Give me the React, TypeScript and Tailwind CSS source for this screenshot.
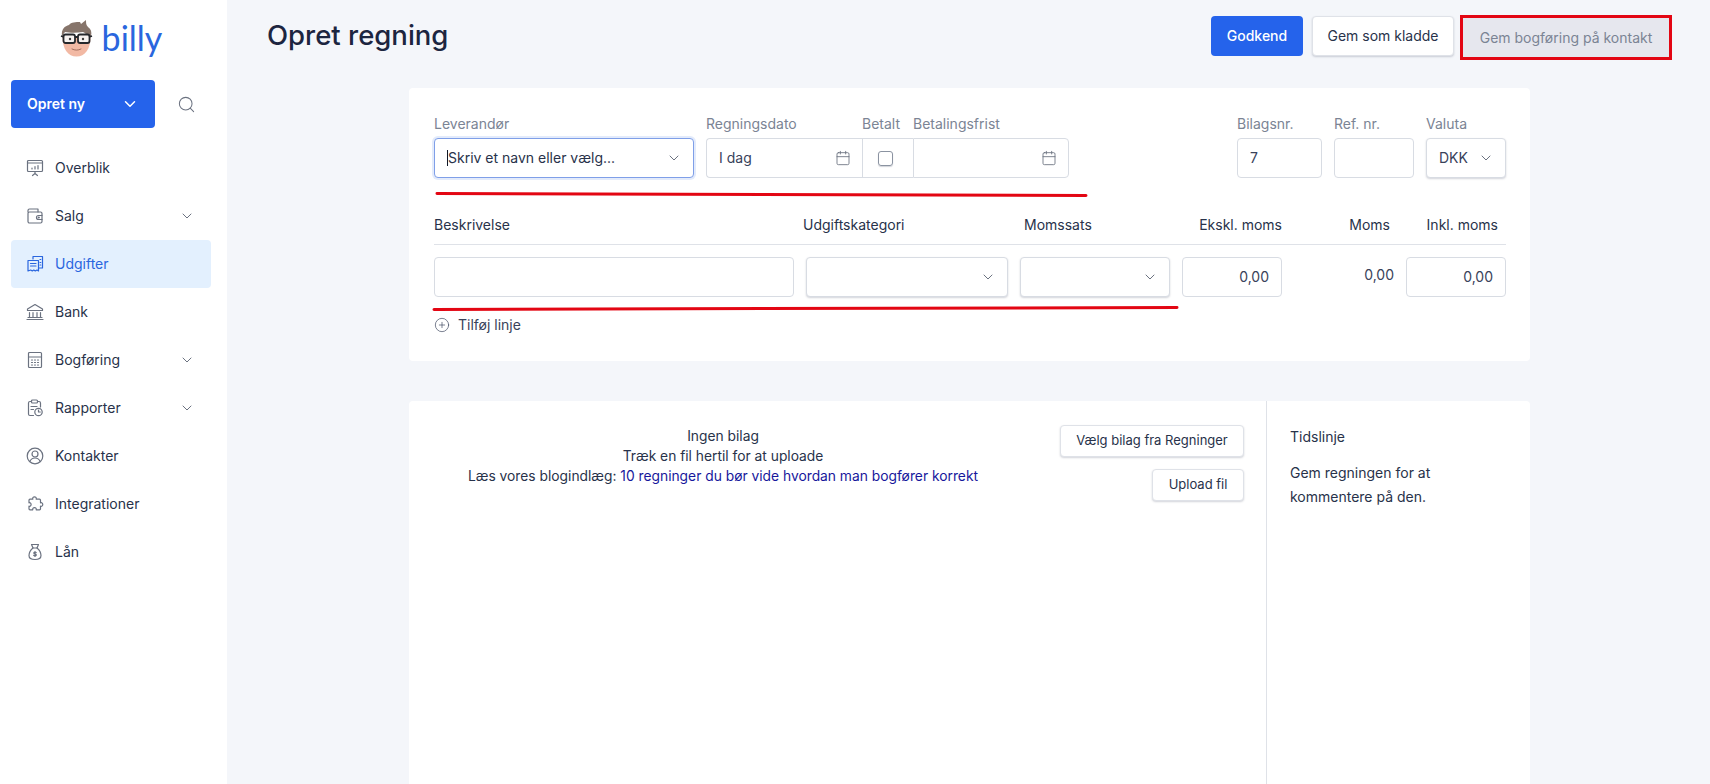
import { Calendar, ChevronDown, CirclePlus, Search } from 'lucide-react';
import type { ReactNode } from 'react';

const stroke = {
  fill: 'none',
  stroke: 'currentColor',
  strokeWidth: 1.2,
  strokeLinecap: 'round' as const,
  strokeLinejoin: 'round' as const,
};

function NavSvg({ children }: { children: ReactNode }) {
  return (
    <svg width="18" height="18" viewBox="0 0 18 18" {...stroke} className="shrink-0">
      {children}
    </svg>
  );
}

function BillyFace() {
  return (
    <svg width="33" height="38" viewBox="0 0 33 38" className="shrink-0">
      <path d="M2.500 18c0 12 5.500 19.500 14 19.500S30.500 30 30.500 18z" fill="#f2b9a4" />
      <path d="M2 17c-1-7 3-10 7-11 2-3 7-3 11-3l1 2 5-4c0 3 0 5 2 7 3 2 4 5 3 9l-3 3c-1-4-2-6-5-7-6 1-13 1-18 0-2 2-3 5-3 7z" fill="#86746a" />
      <rect x="3.500" y="15.500" width="11.500" height="8.500" rx="2" fill="#f8f3f1" stroke="#26282c" strokeWidth="1.800" />
      <rect x="18" y="15.500" width="11.500" height="8.500" rx="2" fill="#f8f3f1" stroke="#26282c" strokeWidth="1.800" />
      <path d="M15 18h3M1 17l3 1M29 18l3-1" stroke="#26282c" strokeWidth="1.800" />
      <circle cx="10" cy="20" r="1.200" fill="#3d3d3d" />
      <circle cx="23" cy="20" r="1.200" fill="#3d3d3d" />
      <path d="M12 30c3 1.500 6 1.500 9 0" fill="none" stroke="#a5705f" strokeWidth="1" strokeLinecap="round" />
    </svg>
  );
}

const OverblikIcon = () => (
  <NavSvg>
    <rect x="1.500" y="1.500" width="15" height="11" rx="1" />
    <path d="M1.500 4h15M9 12.500v2M6.500 16.500 9 14.500l2.500 2M6 10V9M9 10V7.500M12 10V6.500" />
  </NavSvg>
);
const SalgIcon = () => (
  <NavSvg>
    <path d="M2 5V3.500A1.500 1.500 0 0 1 3.500 2h8.500v3" />
    <rect x="2" y="5" width="14" height="11" rx="1.500" />
    <path d="M16 8.500h-3.500a2 2 0 0 0 0 4H16" />
    <circle cx="12.800" cy="10.500" r=".5" />
  </NavSvg>
);
const UdgifterIcon = () => (
  <NavSvg>
    <path d="M7 4V1.500h9.500v11.500H13" />
    <path d="M2 5.500h10.500V16l-1.500-1-1.700 1-1.500-1-1.500 1-1.600-1L2 16z" />
    <path d="M4.500 8.500h5.500M4.500 11h5.500M14 4.500h.800M14 7.500h.800M14 10h.800" />
  </NavSvg>
);
const BankIcon = () => (
  <NavSvg>
    <path d="M9 1.500 1.500 6v1.500h15V6zM3.500 9.500v4.500M7 9.500v4.500M11 9.500v4.500M14.500 9.500v4.500M2 14.500h14M1 16.500h16" />
  </NavSvg>
);
const BogforingIcon = () => (
  <NavSvg>
    <rect x="2.500" y="1.500" width="13" height="15" rx="1" />
    <path d="M2.500 6h13M5.500 9h1M8.500 9h1M11.500 9h1M5.500 11.500h1M8.500 11.500h1M11.500 11.500h1M5.500 14h1M8.500 14h1M11.500 14h1" />
  </NavSvg>
);
const RapporterIcon = () => (
  <NavSvg>
    <path d="M7.500 16.500H4A1.500 1.500 0 0 1 2.500 15V4A1.500 1.500 0 0 1 4 2.500h1.500M11.500 2.500H13A1.500 1.500 0 0 1 14.500 4v4" />
    <rect x="5.500" y="1" width="6" height="3" rx="1" />
    <path d="M5 7.500h6M5 10.500h2.500" />
    <circle cx="12.500" cy="13" r="3.700" />
    <path d="M12.500 11v2h1.800" />
  </NavSvg>
);
const KontakterIcon = () => (
  <NavSvg>
    <circle cx="9" cy="9" r="7.800" />
    <circle cx="9" cy="7" r="3" />
    <path d="M3.800 14.500c1-2.300 3-3.500 5.200-3.500s4.200 1.200 5.200 3.500" />
  </NavSvg>
);
const IntegrationerIcon = () => (
  <NavSvg>
    <path d="M6.800 4.200C6 1 11 1 10.200 4.200h3.300a1 1 0 0 1 1 1v2.600c3-.8 3 4.200 0 3.400v2.600a1 1 0 0 1-1 1h-3.300c.8-3-4.200-3-3.400 0H4a1 1 0 0 1-1-1v-2.600c2.800.8 2.800-4.200 0-3.400V5.200a1 1 0 0 1 1-1z" />
  </NavSvg>
);
const LanIcon = () => (
  <NavSvg>
    <path d="M5.500 1.500h7l-1.500 3.500H7zM7 5h4" />
    <path d="M7 5C4 7.500 3 10 3 12.500 3 15.500 5 16.500 9 16.500s6-1 6-4C15 10 14 7.500 11 5" />
    <path d="M10.200 9.500c-.5-.7-2.400-.8-2.400.4 0 1.300 2.500.7 2.500 2 0 1.200-2 1.200-2.600.4M9 8.500v5" />
  </NavSvg>
);

const navItems = [
  { label: 'Overblik', icon: OverblikIcon },
  { label: 'Salg', icon: SalgIcon, more: true },
  { label: 'Udgifter', icon: UdgifterIcon, active: true },
  { label: 'Bank', icon: BankIcon },
  { label: 'Bogføring', icon: BogforingIcon, more: true },
  { label: 'Rapporter', icon: RapporterIcon, more: true },
  { label: 'Kontakter', icon: KontakterIcon },
  { label: 'Integrationer', icon: IntegrationerIcon },
  { label: 'Lån', icon: LanIcon },
];

function Sidebar() {
  return (
    <aside className="w-[227px] shrink-0 bg-white pl-[11px] pr-4">
      <div className="flex h-[80px] items-center justify-center gap-[9px] pb-[5px]">
        <BillyFace />
        <span className="font-['Lato',sans-serif] text-[34px] leading-none text-[#2a66de]">billy</span>
      </div>
      <div className="flex items-center">
        <button className="flex h-12 w-36 items-center justify-between rounded bg-[#2563eb] pl-4 pr-[16px] text-sm font-semibold text-white">
          Opret ny
          <ChevronDown size={18} strokeWidth={2} />
        </button>
        <Search size={19} strokeWidth={1.3} className="ml-[22px] text-[#6b7280]" />
      </div>
      <nav className="mt-4">
        {navItems.map((item) => (
          <a
            key={item.label}
            className={`flex h-12 items-center gap-[11px] rounded pl-[15px] pr-[16px] text-sm ${
              item.active ? 'bg-[#e3f0fe] text-[#2a66de]' : 'text-[#28324a]'
            }`}
          >
            <span className={item.active ? 'text-[#2a66de]' : 'text-[#6b7280]'}>
              <item.icon />
            </span>
            <span className="flex-1">{item.label}</span>
            {item.more && <ChevronDown size={16} strokeWidth={1.5} className="text-[#6b7280]" />}
          </a>
        ))}
      </nav>
    </aside>
  );
}

function Label({ children, className = '' }: { children?: ReactNode; className?: string }) {
  return <div className={`h-5 text-sm leading-5 text-[#7b8494] ${className}`}>{children}</div>;
}

function Box({ children, className = '' }: { children?: ReactNode; className?: string }) {
  return (
    <div className={`flex h-10 items-center rounded border border-[#d8dce3] bg-white px-3 text-sm text-[#39425a] ${className}`}>
      {children}
    </div>
  );
}

function SelectBox({ children }: { children?: ReactNode }) {
  return (
    <Box className="justify-between pr-[11px] shadow-[0_1px_2px_rgba(30,40,70,0.2)]">
      <span>{children}</span>
      <ChevronDown size={16} strokeWidth={1.5} className="text-[#6b7280]" />
    </Box>
  );
}

function TopFields() {
  return (
    <div className="flex">
      <div className="w-[260px]">
        <Label>Leverandør</Label>
        <div className="mt-1 flex h-10 items-center justify-between rounded border border-[#7f9fe8] bg-white pl-[12px] pr-[11px] text-sm text-[#28324a] shadow-[0_0_0_2px_#e3ebfb]">
          <span className="border-l border-[#111827] leading-4">Skriv et navn eller vælg...</span>
          <ChevronDown size={16} strokeWidth={1.5} className="text-[#6b7280]" />
        </div>
      </div>
      <div className="ml-3 flex">
        <div className="w-[156px]">
          <Label>Regningsdato</Label>
          <Box className="mt-1 justify-between rounded-r-none border-r-0 pr-[11px]">
            I dag
            <Calendar size={16} strokeWidth={1.3} className="text-[#6b7280]" />
          </Box>
        </div>
        <div className="w-[51px]">
          <Label>Betalt</Label>
          <Box className="mt-1 rounded-none border-r-0 pl-[15px] pr-0">
            <span className="h-[15px] w-[15px] rounded-[3px] border border-[#8b93a1] shadow-[0_1px_1px_rgba(30,40,70,0.2)]" />
          </Box>
        </div>
        <div className="w-[156px]">
          <Label>Betalingsfrist</Label>
          <Box className="mt-1 justify-end rounded-l-none pr-[11px]">
            <Calendar size={16} strokeWidth={1.3} className="text-[#6b7280]" />
          </Box>
        </div>
      </div>
      <div className="ml-auto flex gap-3">
        <div className="w-[85px]">
          <Label>Bilagsnr.</Label>
          <Box className="mt-1">7</Box>
        </div>
        <div className="w-[80px]">
          <Label>Ref. nr.</Label>
          <Box className="mt-1" />
        </div>
        <div className="w-[80px]">
          <Label>Valuta</Label>
          <div className="mt-1">
            <SelectBox>DKK</SelectBox>
          </div>
        </div>
      </div>
    </div>
  );
}

function LineTable() {
  return (
    <div className="mt-[37px]">
      <div className="grid grid-cols-[360px_202px_150px_100px_100px_100px] gap-x-3 border-b border-[#dfe2e8] pb-[9px] text-sm leading-5 text-[#28324a]">
        <div>Beskrivelse</div>
        <div className="-ml-[3px]">Udgiftskategori</div>
        <div className="ml-1">Momssats</div>
        <div className="text-right">Ekskl. moms</div>
        <div className="pr-1 text-right">Moms</div>
        <div className="pr-2 text-right">Inkl. moms</div>
      </div>
      <div className="mt-3 grid grid-cols-[360px_202px_150px_100px_100px_100px] gap-x-3">
        <Box />
        <SelectBox />
        <SelectBox />
        <Box className="justify-end">0,00</Box>
        <div className="pt-2 text-right text-sm leading-5 text-[#39425a]">0,00</div>
        <Box className="justify-end">0,00</Box>
      </div>
      <div className="mt-[18px] flex h-5 items-center gap-2 text-sm text-[#39425a]">
        <CirclePlus size={16} strokeWidth={1} className="text-[#39425a]" />
        Tilføj linje
      </div>
    </div>
  );
}

function GhostButton({ children, className = '' }: { children: ReactNode; className?: string }) {
  return (
    <button className={`h-8 whitespace-nowrap rounded border border-[#dfe2e8] bg-white px-3 text-[13px] text-[#28324a] shadow-[0_1px_2px_rgba(30,40,70,0.2)] ${className}`}>
      {children}
    </button>
  );
}

function Attachments() {
  return (
    <div className="ml-[182px] mt-10 flex w-[1121px] flex-1 rounded-t bg-white">
      <div className="flex w-[857px] pt-6">
        <div className="mt-[1px] w-[628px] text-center text-[13.8px] leading-5 text-[#28324a]">
          <div>Ingen bilag</div>
          <div>Træk en fil hertil for at uploade</div>
          <div>
            Læs vores blogindlæg:{' '}
            <a className="text-[#17179c]">10 regninger du bør vide hvordan man bogfører korrekt</a>
          </div>
        </div>
        <div className="ml-[23px] flex w-[184px] flex-col items-end gap-3">
          <GhostButton className="w-[184px]">Vælg bilag fra Regninger</GhostButton>
          <GhostButton className="w-[92px]">Upload fil</GhostButton>
        </div>
      </div>
      <div className="flex-1 border-l border-[#dfe2e8] pl-[23px] pt-[26px] text-sm text-[#28324a]">
        <div className="leading-5">Tidslinje</div>
        <p className="mt-[14px] leading-6">
          Gem regningen for at
          <br />
          kommentere på den.
        </p>
      </div>
    </div>
  );
}

export default function App() {
  return (
    <div className="flex h-[784px] overflow-hidden bg-[#f4f6fa] font-['Inter',sans-serif]">
      <Sidebar />
      <main className="relative flex min-w-0 flex-1 flex-col">
        <header className="flex h-[88px] items-start pl-10 pr-[38px] pt-[15px]">
          <h1 className="mt-[1px] flex h-10 flex-1 items-center text-[27.500px] font-medium text-[#1c2540]">Opret regning</h1>
          <button className="mt-[1px] h-10 w-[92px] rounded bg-[#2563eb] text-sm font-medium text-white">Godkend</button>
          <button className="ml-[9px] mt-[1px] h-10 w-[142px] rounded border border-[#dfe2e8] bg-white text-sm text-[#28324a] shadow-[0_1px_2px_rgba(30,40,70,0.2)]">
            Gem som kladde
          </button>
          <button className="ml-[6px] h-[45px] w-[212px] border-[3px] border-[#e30613] bg-[#e6e7ee] text-sm text-[#7b8494]">
            Gem bogføring på kontakt
          </button>
        </header>
        <section className="ml-[182px] w-[1121px] rounded bg-white pb-[26px] pl-[25px] pr-[24px] pt-[26px]">
          <TopFields />
          <LineTable />
        </section>
        <Attachments />
        {/* red annotation strokes drawn over the form */}
        <svg className="pointer-events-none absolute left-0 top-0" width="1483" height="784" fill="none">
          <path d="M210 193.500 859 195.500" stroke="#e30613" strokeWidth="3" strokeLinecap="round" />
          <path d="M207 309.500 950 307.500" stroke="#e30613" strokeWidth="3" strokeLinecap="round" />
        </svg>
      </main>
    </div>
  );
}
